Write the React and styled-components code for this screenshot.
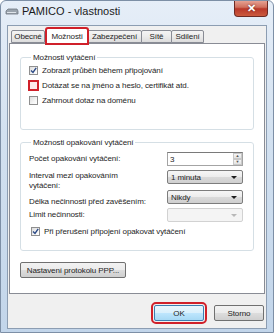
import styled, { createGlobalStyle } from "styled-components"

const Global = createGlobalStyle`
    html, body {
        margin: 0;
        padding: 0;
        background: #ffffff;
    }
    body {
        font-family: "Liberation Sans", Arial, sans-serif;
        font-size: 8px;
        letter-spacing: -0.1px;
    }
`

const Window = styled.div`
    width: 274px;
    height: 333px;
    box-sizing: border-box;
    display: flex;
    flex-direction: column;
    background: linear-gradient(180deg, #e6eef8 0%, #d3e1f0 40%, #c2d5ea 100%);
    border: 1px solid #7d8fa6;
    border-radius: 6px 6px 0 0;
    overflow: hidden;
`

const TitleBar = styled.div`
    height: 24px;
    flex: none;
    display: flex;
    align-items: flex-start;
    padding-left: 4px;
`

const TitleIcon = styled.svg`
    margin-top: 6px;
    width: 14px;
    height: 10px;
`

const Title = styled.span`
    margin-top: 4px;
    margin-left: 3px;
    font-size: 11px;
    letter-spacing: 0;
    color: #1b1b1b;
`

const CloseButton = styled.div`
    margin-left: auto;
    margin-right: 5px;
    margin-top: -1px;
    width: 34px;
    height: 17px;
    box-sizing: border-box;
    border: 1px solid #6d2a24;
    border-top: none;
    border-radius: 0 0 4px 4px;
    background: linear-gradient(180deg, #e9a99b 0%, #d0705e 45%, #b9382a 55%, #cb5a3e 100%);
    display: flex;
    align-items: center;
    justify-content: center;
    color: #ffffff;
    font-size: 11px;
    font-weight: bold;
    text-shadow: 0 0 2px #5a1a12;
`

const Client = styled.div`
    flex: 1;
    margin: 0 6px 3px 6px;
    background: #f0f0f0;
    border: 1px solid #8c9db2;
    display: flex;
    flex-direction: column;
    padding: 2px 1px 0 1px;
`

const TabRow = styled.div`
    display: flex;
    align-items: flex-end;
    padding-left: 2px;
    height: 15px;
    position: relative;
    z-index: 1;
`

const Tab = styled.div`
    width: ${p => p.$w}px;
    height: ${p => (p.$active ? "16px" : "13px")};
    box-sizing: border-box;
    margin: ${p => (p.$active ? "0 0 -1px 1px" : "0 0 0 -1px")};
    &:first-child {
        margin-left: 0;
    }
    border: 1px solid #898c95;
    border-bottom: ${p => (p.$active ? "none" : "1px solid #898c95")};
    background: ${p => (p.$active ? "#ffffff" : "linear-gradient(180deg, #f4f4f4 0%, #ebebeb 50%, #dcdcdc 100%)")};
    color: #1e1e1e;
    display: flex;
    align-items: center;
    justify-content: center;
    white-space: nowrap;
    border-radius: 2px 2px 0 0;
    position: relative;
    z-index: ${p => (p.$active ? 2 : 1)};
    ${p => p.$marked && `
        outline: 2px solid #d0202a;
        outline-offset: -1px;
    `}
`

const Panel = styled.div`
    flex: 1;
    background: #ffffff;
    border: 1px solid #898c95;
    box-sizing: border-box;
    padding: 8px 10px 0 10px;
    display: flex;
    flex-direction: column;
`

const Group = styled.fieldset`
    margin: 0;
    border: 1px solid #d5dfe5;
    border-radius: 3px;
    padding: 0 10px ${p => p.$bottom}px 8px;
    box-sizing: border-box;
    margin-bottom: ${p => p.$gap || 0}px;
`

const Legend = styled.legend`
    color: #1e1e1e;
    padding: 0 2px;
    margin-left: 2px;
    line-height: 11px;
`

const CheckRow = styled.label`
    display: flex;
    align-items: center;
    height: 15px;
    color: #1e1e1e;
    gap: 4px;
    padding-left: ${p => p.$indent || 0}px;
    margin-top: ${p => p.$top || 0}px;
`

const Box = styled.span`
    width: 9px;
    height: 9px;
    box-sizing: border-box;
    border: 1px solid ${p => (p.$marked ? "#d0202a" : "#8f8f8f")};
    background: ${p => (p.$marked ? "#fde9ea" : "linear-gradient(135deg, #dcdcdc 0%, #f4f4f4 60%, #ffffff 100%)")};
    display: flex;
    align-items: center;
    justify-content: center;
    flex: none;
    ${p => p.$marked && `outline: 1px solid #d0202a;`}
`

const Grid = styled.div`
    display: grid;
    grid-template-columns: minmax(0, 1fr) 76px;
    grid-template-rows: 14px 16px 14px 14px;
    row-gap: 4px;
    margin-top: 4px;
    align-items: center;
`

const FieldLabel = styled.div`
    color: #1e1e1e;
    line-height: 9.5px;
    white-space: nowrap;
    align-self: ${p => p.$align || "center"};
    padding-top: ${p => (p.$align === "start" ? "1px" : "0")};
    margin-bottom: ${p => (p.$align === "end" ? "-2px" : "0")};
`

const Input = styled.div`
    height: 14px;
    box-sizing: border-box;
    border: 1px solid #a4a4a4;
    border-top-color: #7a7a7a;
    background: #ffffff;
    display: flex;
    align-items: center;
    color: #1e1e1e;
    padding-left: 2px;
    align-self: start;
`

const Spin = styled.div`
    margin-left: auto;
    width: 9px;
    height: 12px;
    display: flex;
    flex-direction: column;
`

const SpinHalf = styled.div`
    flex: 1;
    background: linear-gradient(180deg, #f6f6f6, #e2e2e2);
    border: 1px solid #c8c8c8;
    display: flex;
    align-items: center;
    justify-content: center;
    font-size: 4px;
    color: #555555;
    line-height: 1;
`

const Combo = styled.div`
    height: 14px;
    box-sizing: border-box;
    border: 1px solid ${p => (p.$disabled ? "#d2d2d2" : "#7d7d7d")};
    border-radius: 2px;
    background: ${p => (p.$disabled ? "#f4f4f4" : "linear-gradient(180deg, #f6f6f6 0%, #ececec 50%, #dadada 51%, #cfcfcf 100%)")};
    display: flex;
    align-items: center;
    color: #1e1e1e;
    padding: 0 5px 0 3px;
    align-self: start;
`

const Arrow = styled.span`
    margin-left: auto;
    width: 0;
    height: 0;
    border-left: 3px solid transparent;
    border-right: 3px solid transparent;
    border-top: 3px solid ${p => (p.$disabled ? "#b8b8b8" : "#1e1e1e")};
`

const Check = () => (
    <svg width="7" height="7" viewBox="0 0 7 7">
        <path d="M1 3.5 L3 5.5 L6.2 0.8" stroke="#2c4a86" strokeWidth="1.4" fill="none" />
    </svg>
)

const Button = styled.div`
    height: 16px;
    width: ${p => p.$width}px;
    box-sizing: border-box;
    border: 1px solid #707070;
    border-radius: 2px;
    background: linear-gradient(180deg, #f2f2f2 0%, #ebebeb 50%, #dddddd 51%, #cfcfcf 100%);
    color: #1e1e1e;
    display: flex;
    align-items: center;
    justify-content: center;
    white-space: nowrap;
    flex: none;
    ${p => p.$marked && `
        outline: 2px solid #d0202a;
        outline-offset: 1px;
        border-color: #3c7fb1;
        background: linear-gradient(180deg, #eaf6fd 0%, #d9f0fc 50%, #bee6fd 51%, #a7d9f5 100%);
    `}
`

const PanelButtonRow = styled.div`
    margin-top: 11px;
    display: flex;
`

const Footer = styled.div`
    display: flex;
    justify-content: flex-end;
    gap: 10px;
    padding: 11px 1px 7px 0;
`

const App = () => {
    return (
        <>
            <Global />
            <Window>
                <TitleBar>
                    <TitleIcon viewBox="0 0 14 10">
                        <path d="M1 4 L3 2 H12 L13 4 V7 H1 Z" fill="#9aa3ad" stroke="#6f7780" strokeWidth="0.8" />
                        <rect x="2" y="5" width="9" height="1" fill="#dfe4ea" />
                    </TitleIcon>
                    <Title>PAMICO - vlastnosti</Title>
                    <CloseButton>✕</CloseButton>
                </TitleBar>
                <Client>
                    <TabRow>
                        <Tab $w={34}>Obecné</Tab>
                        <Tab $w={42} $active $marked>Možnosti</Tab>
                        <Tab $w={55}>Zabezpečení</Tab>
                        <Tab $w={31}>Sítě</Tab>
                        <Tab $w={33}>Sdílení</Tab>
                    </TabRow>
                    <Panel>
                        <Group $bottom={21} $gap={7}>
                            <Legend>Možnosti vytáčení</Legend>
                            <CheckRow>
                                <Box><Check /></Box>
                                Zobrazit průběh během připojování
                            </CheckRow>
                            <CheckRow>
                                <Box $marked />
                                Dotázat se na jméno a heslo, certifikát atd.
                            </CheckRow>
                            <CheckRow>
                                <Box />
                                Zahrnout dotaz na doménu
                            </CheckRow>
                        </Group>
                        <Group $bottom={11}>
                            <Legend>Možnosti opakování vytáčení</Legend>
                            <Grid>
                                <FieldLabel>Počet opakování vytáčení:</FieldLabel>
                                <Input>
                                    3
                                    <Spin>
                                        <SpinHalf>▲</SpinHalf>
                                        <SpinHalf>▼</SpinHalf>
                                    </Spin>
                                </Input>
                                <FieldLabel $align="start">Interval mezi opakováním<br />vytáčení:</FieldLabel>
                                <Combo>1 minuta<Arrow /></Combo>
                                <FieldLabel $align="end">Délka nečinnosti před zavěšením:</FieldLabel>
                                <Combo>Nikdy<Arrow /></Combo>
                                <FieldLabel>Limit nečinnosti:</FieldLabel>
                                <Combo $disabled><Arrow $disabled /></Combo>
                            </Grid>
                            <CheckRow $indent={2} $top={2}>
                                <Box><Check /></Box>
                                Při přerušení připojení opakovat vytáčení
                            </CheckRow>
                        </Group>
                        <PanelButtonRow>
                            <Button $width={106}>Nastavení protokolu PPP...</Button>
                        </PanelButtonRow>
                    </Panel>
                    <Footer>
                        <Button $width={50} $marked>OK</Button>
                        <Button $width={50}>Storno</Button>
                    </Footer>
                </Client>
            </Window>
        </>
    )
}

export default App
